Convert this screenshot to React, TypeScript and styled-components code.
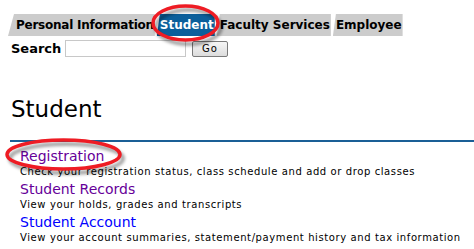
import React from 'react';
import styled, {createGlobalStyle} from 'styled-components';

const GlobalStyle = createGlobalStyle`
  html, body {
    margin: 0;
    padding: 0;
    background: #fff;
  }
  body {
    font-family: "DejaVu Sans", Verdana, sans-serif;
    color: #000;
  }
`;

type Tab = {
    label: string;
    active?: boolean
};

const tabs: Tab[] = [
    {label: 'Personal Information'},
    {label: 'Student', active: true},
    {label: 'Faculty Services'},
    {label: 'Employee'}
];

type Item = {
    title: string;
    desc: string;
    visited: boolean
};

const items: Item[] = [
    {
        title: 'Registration',
        desc: 'Check your registration status, class schedule and add or drop classes',
        visited: true
    },
    {
        title: 'Student Records',
        desc: 'View your holds, grades and transcripts',
        visited: true
    },
    {
        title: 'Student Account',
        desc: 'View your account summaries, statement/payment history and tax information',
        visited: false
    }
];

// 빨간 타원 표시 (그림자 포함)
const Circle: React.FC<{id: string; w: number; h: number}> = ({id, w, h}) => (
    <svg width={w + 10} height={h + 10} viewBox={`0 0 ${w + 10} ${h + 10}`}>
        <defs>
            <filter id={id} x="-20%" y="-20%" width="140%" height="140%">
                <feGaussianBlur stdDeviation="1.5"/>
            </filter>
        </defs>
        <ellipse
            cx={w / 2 + 3}
            cy={h / 2 + 4}
            rx={w / 2 - 2}
            ry={h / 2 - 2}
            fill="none"
            stroke="rgba(0,0,0,0.35)"
            strokeWidth={4}
            filter={`url(#${id})`}/>
        <ellipse
            cx={w / 2}
            cy={h / 2}
            rx={w / 2 - 2}
            ry={h / 2 - 2}
            fill="none"
            stroke="#ee1c24"
            strokeWidth={3.5}/>
    </svg>
);

export default function App() {
    return (
        <Page>
            <GlobalStyle/>
            <TabBar>
                {tabs.map((t, i) => (
                    <TabItem key={t.label} $active={!!t.active} $first={i === 0}>
                        {t.label}
                    </TabItem>
                ))}
            </TabBar>

            <SearchRow>
                <SearchLabel>Search</SearchLabel>
                <SearchInput type="text"/>
                <GoButton type="button">Go</GoButton>
            </SearchRow>

            <Heading>Student</Heading>
            <Rule/>

            <List>
                {items.map(it => (
                    <Entry key={it.title}>
                        <LinkText href="#" $visited={it.visited}>{it.title}</LinkText>
                        <Desc>{it.desc}</Desc>
                    </Entry>
                ))}
            </List>

            <Mark style={{left: 151, top: 4}}>
                <Circle id="m1" w={69} h={38}/>
            </Mark>
            <Mark style={{left: 5, top: 138}}>
                <Circle id="m2" w={117} h={33}/>
            </Mark>
        </Page>
    );
}

// --------------------------------------
// styled-components
// --------------------------------------

const Page = styled.div`
  width: 474px;
  height: 249px;
  overflow: hidden;
  position: relative;
`;

const TabBar = styled.div`
  display: flex;
  margin: 14px 0 0 8px;
  height: 22px;
`;

const TabItem = styled.div<{$active: boolean; $first: boolean}>`
  display: flex;
  align-items: center;
  height: 22px;
  padding: 0 1px 0 ${({$first}) => ($first ? '8px' : '3px')};
  margin-right: 2px;
  background: ${({$active}) => ($active ? '#0b5f9b' : '#cccccc')};
  color: ${({$active}) => ($active ? '#fff' : '#000')};
  font-size: 12px;
  font-weight: bold;
  letter-spacing: ${({$first}) => ($first ? '-0.25px' : '0')};
  white-space: nowrap;
  clip-path: ${({$first}) => ($first
      ? 'polygon(6px 0, 100% 0, 100% 100%, 0 100%)'
      : 'polygon(3px 0, 100% 0, 100% 100%, 0 100%)')};
`;

const Mark = styled.div`
  position: absolute;
  pointer-events: none;
  line-height: 0;
`;

const SearchRow = styled.div`
  display: flex;
  align-items: center;
  margin: 4px 0 0 11px;
  height: 17px;
`;

const SearchLabel = styled.span`
  font-size: 13px;
  font-weight: bold;
  width: 54px;
`;

const SearchInput = styled.input`
  box-sizing: border-box;
  width: 121px;
  height: 17px;
  border: 1px solid #c8c8c8;
  padding: 0 2px;
  font-size: 11px;
`;

const GoButton = styled.button`
  box-sizing: border-box;
  margin-left: 6px;
  width: 36px;
  height: 16px;
  padding: 0;
  border: 1px solid #7a7a7a;
  border-radius: 2px;
  background: linear-gradient(#f6f6f6, #dcdcdc);
  font-family: "DejaVu Sans", Verdana, sans-serif;
  font-size: 10px;
  letter-spacing: 1px;
  color: #000;
`;

const Heading = styled.h1`
  margin: 38px 0 0 11px;
  font-size: 23px;
  font-weight: normal;
  line-height: 28px;
`;

const Rule = styled.div`
  margin: 17px 0 0 10px;
  height: 2px;
  background: #1a5f96;
`;

const List = styled.div`
  display: flex;
  flex-direction: column;
  gap: 2px;
  margin: 6px 0 0 20px;
`;

const Entry = styled.div`
  display: flex;
  flex-direction: column;
`;

const LinkText = styled.a<{$visited: boolean}>`
  font-size: 14px;
  line-height: 17px;
  color: ${({$visited}) => ($visited ? '#660099' : '#0000ff')};
  text-decoration: none;
`;

const Desc = styled.span`
  font-size: 10px;
  line-height: 14px;
  letter-spacing: 0.6px;
  white-space: nowrap;
`;
